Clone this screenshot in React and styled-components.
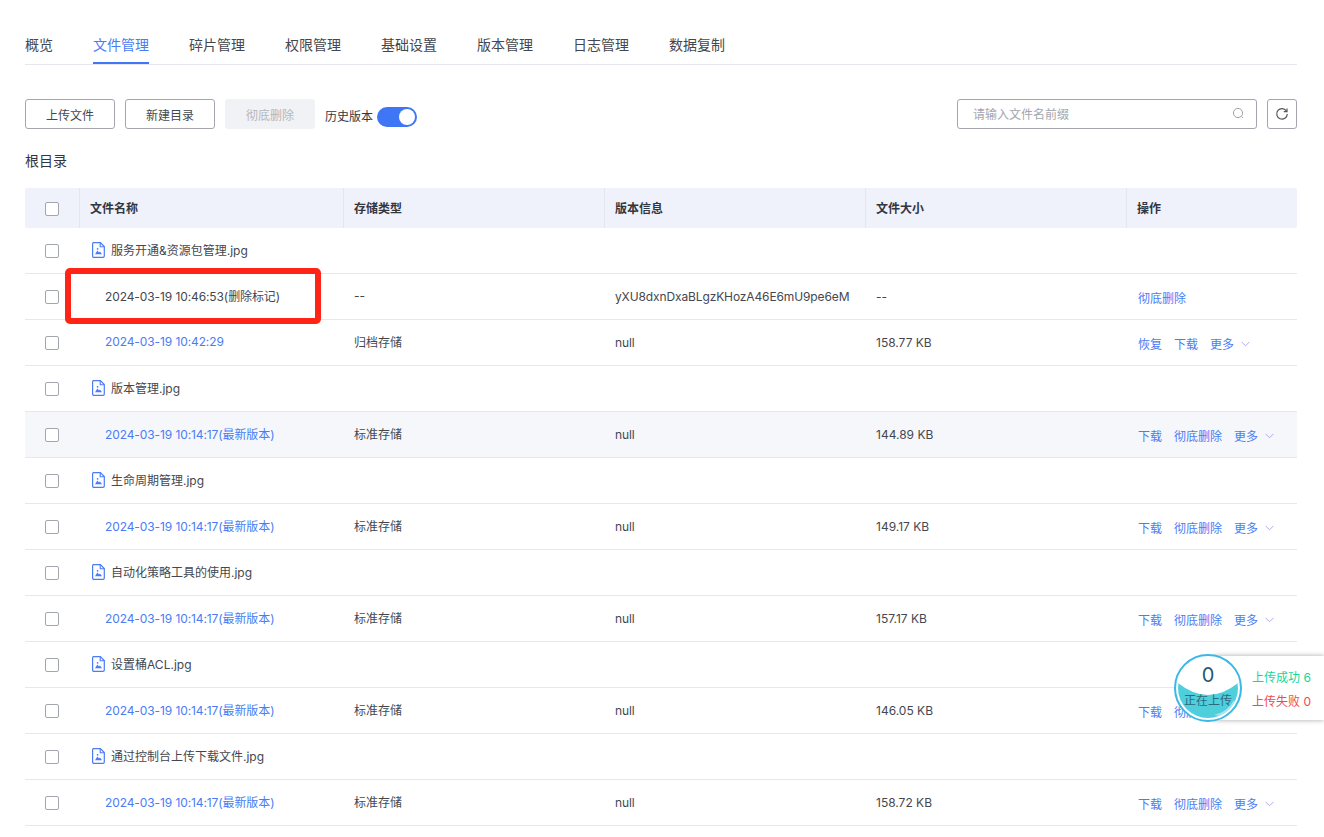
import styled, { createGlobalStyle } from "styled-components";

const GlobalStyle = createGlobalStyle`
  html, body {
    margin: 0;
    padding: 0;
    background: #fff;
    font-family: "Inter", "Noto Sans CJK SC", sans-serif;
    color: #33363f;
  }
  * { box-sizing: border-box; }
`;

const tabs = ["概览", "文件管理", "碎片管理", "权限管理", "基础设置", "版本管理", "日志管理", "数据复制"];

const rows = [
  { file: "服务开通&资源包管理.jpg" },
  { time: "2024-03-19 10:46:53(删除标记)", plain: true, type: "--", version: "yXU8dxnDxaBLgzKHozA46E6mU9pe6eM", size: "--", ops: ["彻底删除"] },
  { time: "2024-03-19 10:42:29", type: "归档存储", version: "null", size: "158.77 KB", ops: ["恢复", "下载"], more: true },
  { file: "版本管理.jpg" },
  { time: "2024-03-19 10:14:17(最新版本)", type: "标准存储", version: "null", size: "144.89 KB", ops: ["下载", "彻底删除"], more: true, hover: true },
  { file: "生命周期管理.jpg" },
  { time: "2024-03-19 10:14:17(最新版本)", type: "标准存储", version: "null", size: "149.17 KB", ops: ["下载", "彻底删除"], more: true },
  { file: "自动化策略工具的使用.jpg" },
  { time: "2024-03-19 10:14:17(最新版本)", type: "标准存储", version: "null", size: "157.17 KB", ops: ["下载", "彻底删除"], more: true },
  { file: "设置桶ACL.jpg" },
  { time: "2024-03-19 10:14:17(最新版本)", type: "标准存储", version: "null", size: "146.05 KB", ops: ["下载", "彻底删除"], more: true },
  { file: "通过控制台上传下载文件.jpg" },
  { time: "2024-03-19 10:14:17(最新版本)", type: "标准存储", version: "null", size: "158.72 KB", ops: ["下载", "彻底删除"], more: true },
];

const FileIcon = () => (
  <svg width="13" height="16" viewBox="0 0 13 16" fill="none">
    <path d="M1.6 0.7H8.4L12.3 4.6V14A1.3 1.3 0 0 1 11 15.3H1.6A1.3 1.3 0 0 1 .6 14V2A1.3 1.3 0 0 1 1.6 .7Z" stroke="#4a7cf5" strokeWidth="1.2" />
    <path d="M8.2 .8V4.8H12.2" stroke="#4a7cf5" strokeWidth="1.1" />
    <path d="M3 12.2L5.4 8.6L7 10.6L8 9.6L10 12.2Z" fill="#4a7cf5" />
    <circle cx="5.6" cy="6.8" r=".9" fill="#4a7cf5" />
  </svg>
);

const SearchIcon = () => (
  <svg width="13" height="13" viewBox="0 0 13 13" fill="none" stroke="#9fa3ab" strokeWidth="1">
    <circle cx="6" cy="6" r="4.6" />
    <path d="M9.5 9.5L11 11" />
  </svg>
);

const RefreshIcon = () => (
  <svg width="14" height="14" viewBox="0 0 14 14" fill="none" stroke="#555" strokeWidth="1.2">
    <path d="M11.6 4.2A5.3 5.3 0 1 0 12.3 7" />
    <path d="M12 1.4V4.6H8.8" />
  </svg>
);

const Chevron = () => (
  <svg width="9" height="6" viewBox="0 0 9 6" fill="none" stroke="#b3a8ee" strokeWidth="1">
    <path d="M.5 .8L4.5 4.8L8.5 .8" />
  </svg>
);

const Water = () => (
  <WaterSvg viewBox="0 0 60 60">
    <defs>
      <clipPath id="ball"><circle cx="30" cy="30" r="30" /></clipPath>
    </defs>
    <g clipPath="url(#ball)">
      <path d="M0 25Q30 49 60 25V60H0Z" fill="#4fcfdc" />
      <path d="M36 57Q50 54 56 42L60 60Z" fill="#a9e6ee" />
    </g>
  </WaterSvg>
);

export default function App() {
  return (
    <Page>
      <GlobalStyle />
      <Tabs>
        {tabs.map((t) => (
          <Tab key={t} $active={t === "文件管理"}>{t}</Tab>
        ))}
      </Tabs>

      <Toolbar>
        <Button>上传文件</Button>
        <Button>新建目录</Button>
        <Button $disabled>彻底删除</Button>
        <SwitchLabel>历史版本</SwitchLabel>
        <Switch />
        <ToolbarRight>
          <Search>
            <Placeholder>请输入文件名前缀</Placeholder>
            <SearchIcon />
          </Search>
          <IconButton><RefreshIcon /></IconButton>
        </ToolbarRight>
      </Toolbar>

      <Crumb>根目录</Crumb>

      <Table>
        <HeadRow>
          <HeadCheck><Check /></HeadCheck>
          <HeadCell>文件名称</HeadCell>
          <HeadCell>存储类型</HeadCell>
          <HeadCell>版本信息</HeadCell>
          <HeadCell>文件大小</HeadCell>
          <HeadCell>操作</HeadCell>
        </HeadRow>
        {rows.map((r, i) => (
          <Row key={i} $hover={r.hover}>
            <Cell $center><Check /></Cell>
            {r.file ? (
              <FileCell><FileIcon />{r.file}</FileCell>
            ) : (
              <>
                <TimeCell $plain={r.plain}>{r.time}</TimeCell>
                <TypeCell>{r.type}</TypeCell>
                <VersionCell>{r.version}</VersionCell>
                <Cell>{r.size}</Cell>
                <Ops>
                  {r.ops.map((o) => <span key={o}>{o}</span>)}
                  {r.more && <More>更多<Chevron /></More>}
                </Ops>
              </>
            )}
          </Row>
        ))}
      </Table>

      <Mark />

      <UploadPanel>
        <span className="ok">上传成功 6</span>
        <span className="fail">上传失败 0</span>
      </UploadPanel>
      <Ball>
        <Water />
        <BallCount>0</BallCount>
        <BallText>正在上传</BallText>
      </Ball>
    </Page>
  );
}

const Page = styled.div`
  position: relative;
  width: 1324px;
  height: 837px;
  overflow: hidden;
  padding: 25px 27px 0 25px;
  font-size: 12px;
`;

const Tabs = styled.div`
  display: flex;
  gap: 40px;
  height: 40px;
  border-bottom: 1px solid #e4e6f0;
`;

const Tab = styled.div`
  height: 39px;
  line-height: 40px;
  font-size: 14px;
  color: ${(p) => (p.$active ? "#4a7cf5" : "#44474f")};
  border-bottom: ${(p) => (p.$active ? "2px solid #3f76f6" : "none")};
`;

const Toolbar = styled.div`
  display: flex;
  align-items: center;
  height: 30px;
  margin-top: 34px;
`;

const Button = styled.div`
  width: 90px;
  height: 30px;
  margin-right: 10px;
  display: flex;
  align-items: center;
  justify-content: center;
  border-radius: 3px;
  border: 1px solid ${(p) => (p.$disabled ? "#f1f2f6" : "#a3a6ae")};
  background: ${(p) => (p.$disabled ? "#f1f2f6" : "#fff")};
  color: ${(p) => (p.$disabled ? "#b4b6bc" : "#44474f")};
`;

const SwitchLabel = styled.span`
  color: #33363f;
  margin-top: 3px;
`;

const Switch = styled.div`
  position: relative;
  width: 40px;
  height: 20px;
  margin: 5px 0 0 4px;
  border-radius: 10px;
  background: #3f76f6;
  &::after {
    content: "";
    position: absolute;
    right: 2px;
    top: 2px;
    width: 16px;
    height: 16px;
    border-radius: 50%;
    background: #fff;
  }
`;

const ToolbarRight = styled.div`
  display: flex;
  gap: 10px;
  margin-left: auto;
`;

const Search = styled.div`
  width: 300px;
  height: 30px;
  padding: 0 11px 2px 15px;
  display: flex;
  align-items: center;
  justify-content: space-between;
  border: 1px solid #a3a6ae;
  border-radius: 3px;
`;

const Placeholder = styled.span`
  color: #a3a6ae;
`;

const IconButton = styled.div`
  width: 30px;
  height: 30px;
  display: flex;
  align-items: center;
  justify-content: center;
  border: 1px solid #a3a6ae;
  border-radius: 3px;
`;

const Crumb = styled.div`
  margin-top: 22px;
  height: 20px;
  line-height: 20px;
  font-size: 14px;
  color: #33363f;
`;

const Table = styled.div`
  margin-top: 17px;
`;

const columns = "54px 264px 261px 261px 261px 171px";

const HeadRow = styled.div`
  display: grid;
  grid-template-columns: ${columns};
  height: 40px;
  background: #eff2fb;
  border-radius: 2px;
`;

const HeadCheck = styled.div`
  display: flex;
  align-items: center;
  justify-content: center;
  padding-top: 2px;
`;

const HeadCell = styled.div`
  display: flex;
  align-items: center;
  padding: 0 0 2px 10px;
  font-weight: 700;
  color: #33363f;
  border-left: 1px solid #e3e6f0;
`;

const Row = styled.div`
  display: grid;
  grid-template-columns: ${columns};
  height: 46px;
  border-bottom: 1px solid #e6e7f0;
  background: ${(p) => (p.$hover ? "#f6f7fa" : "#fff")};
`;

const Cell = styled.div`
  display: flex;
  align-items: center;
  justify-content: ${(p) => (p.$center ? "center" : "flex-start")};
  padding-left: ${(p) => (p.$center ? "0" : "11px")};
  color: #44474f;
  white-space: nowrap;
`;

const FileCell = styled(Cell)`
  grid-column: 2 / -1;
  gap: 6px;
  padding-left: 13px;
  padding-bottom: 2px;
`;

const TimeCell = styled(Cell)`
  padding-left: 26px;
  padding-bottom: 2px;
  letter-spacing: -0.1px;
  color: ${(p) => (p.$plain ? "#44474f" : "#4a7cf5")};
`;

const TypeCell = styled(Cell)`
  padding-bottom: 2px;
`;

const VersionCell = styled(Cell)`
  letter-spacing: -0.12px;
`;

const Ops = styled(Cell)`
  gap: 12px;
  padding-top: 2px;
  padding-left: 12px;
  color: #4a7cf5;
`;

const More = styled.span`
  display: inline-flex;
  align-items: center;
  gap: 7px;
`;

const Check = styled.div`
  width: 14px;
  height: 14px;
  background: #fff;
  border: 1px solid #a3a6ae;
  border-radius: 2px;
`;

const Mark = styled.div`
  position: absolute;
  left: 65px;
  top: 268px;
  width: 256px;
  height: 56px;
  border: 6px solid #ff2416;
  border-radius: 5px;
`;

const UploadPanel = styled.div`
  position: absolute;
  left: 1214px;
  top: 656px;
  width: 110px;
  height: 64px;
  padding: 4px 0 0 38px;
  display: flex;
  flex-direction: column;
  justify-content: center;
  gap: 8px;
  background: #fff;
  box-shadow: 0 0 5px rgba(0, 0, 0, 0.35);
  line-height: 16px;
  .ok { color: #12d89d; }
  .fail { color: #f0494f; }
`;

const Ball = styled.div`
  position: absolute;
  left: 1174px;
  top: 654px;
  width: 68px;
  height: 68px;
  padding: 3px;
  display: flex;
  flex-direction: column;
  align-items: center;
  border-radius: 50%;
  border: 2px solid #3bb8e8;
  background: #fff;
`;

const WaterSvg = styled.svg`
  position: absolute;
  left: 2px;
  top: 2px;
  width: 60px;
  height: 60px;
`;

const BallCount = styled.div`
  position: relative;
  margin-top: 6px;
  font-size: 20px;
  line-height: 20px;
  color: #1d5a78;
`;

const BallText = styled.div`
  position: relative;
  margin-top: 8px;
  line-height: 16px;
  color: #2c6a80;
  white-space: nowrap;
`;
